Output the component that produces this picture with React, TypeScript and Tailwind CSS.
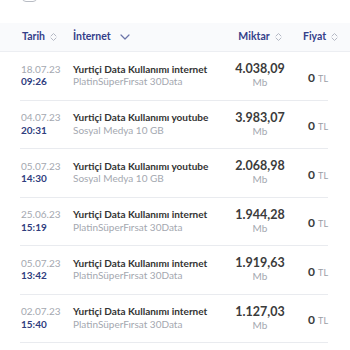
import React from 'react';

type Row = {
  date: string;
  time: string;
  title: string;
  sub: string;
  amount: string;
};

const rows: Row[] = [
  { date: '18.07.23', time: '09:26', title: 'Yurtiçi Data Kullanımı internet', sub: 'PlatinSüperFırsat 30Data', amount: '4.038,09' },
  { date: '04.07.23', time: '20:31', title: 'Yurtiçi Data Kullanımı youtube', sub: 'Sosyal Medya 10 GB', amount: '3.983,07' },
  { date: '05.07.23', time: '14:30', title: 'Yurtiçi Data Kullanımı youtube', sub: 'Sosyal Medya 10 GB', amount: '2.068,98' },
  { date: '25.06.23', time: '15:19', title: 'Yurtiçi Data Kullanımı internet', sub: 'PlatinSüperFırsat 30Data', amount: '1.944,28' },
  { date: '05.07.23', time: '13:42', title: 'Yurtiçi Data Kullanımı internet', sub: 'PlatinSüperFırsat 30Data', amount: '1.919,63' },
  { date: '02.07.23', time: '15:40', title: 'Yurtiçi Data Kullanımı internet', sub: 'PlatinSüperFırsat 30Data', amount: '1.127,03' },
];

const SortIcon = () => (
  <svg width="7" height="10" viewBox="0 0 7 10" fill="none" stroke="#b4b8c4" strokeWidth="1" className="ml-[5px] shrink-0">
    <path d="M1 4 L3.5 1.5 L6 4" strokeLinecap="round" strokeLinejoin="round" />
    <path d="M1 6 L3.5 8.5 L6 6" strokeLinecap="round" strokeLinejoin="round" />
  </svg>
);

const App: React.FC = () => {
  return (
    <div className="w-[350px] h-[350px] overflow-hidden bg-white font-['Lato',sans-serif]">
      {/* Filter (cut off at top) */}
      <div className="h-[23px] overflow-hidden">
        <div className="flex items-center gap-[8px] pl-[22px] -mt-[15px]">
          <div className="w-[15px] h-[17px] rounded-[4px] border border-[#b8bcc4] bg-white" />
          <span className="text-[12px] leading-[17px] text-[#555]">Fiyatı 0 TL olanları gizle</span>
        </div>
      </div>

      {/* Header */}
      <div className="h-[29px] bg-[#f9fafc] border-b border-[#eceef2]">
        <div className="ml-[20px] w-[308px] h-full grid grid-cols-[52px_143px_86px_27px] items-center text-[10.5px] font-bold text-[#34408a] whitespace-nowrap">
          <div className="flex items-center pl-[2px]">
            Tarih
            <SortIcon />
          </div>
          <div className="flex items-center pl-[1px]">
            İnternet
            <svg width="10" height="6" viewBox="0 0 10 6" fill="none" stroke="#6b74a8" strokeWidth="1.2" className="ml-[9px]">
              <path d="M1 1 L5 5 L9 1" strokeLinecap="round" strokeLinejoin="round" />
            </svg>
          </div>
          <div className="flex items-center justify-center pl-[4px]">
            Miktar
            <SortIcon />
          </div>
          <div className="flex items-center pl-[2px]">
            Fiyat
            <SortIcon />
          </div>
        </div>
      </div>

      {/* Rows */}
      <div className="ml-[20px] w-[308px]">
        {rows.map((r, i) => (
          <div
            key={i}
            className="h-[48.5px] grid grid-cols-[52px_143px_86px_27px] items-center border-b border-[#e9ebef] whitespace-nowrap"
          >
            <div className="flex flex-col text-[10px] leading-[12.5px] -mt-[1px] pl-[1px]">
              <span className="text-[#a4a8b0]">{r.date}</span>
              <span className="text-[#2f3d7e] font-bold">{r.time}</span>
            </div>
            <div className="flex flex-col text-[10px] leading-[12.5px] -mt-[1px] pl-[1px]">
              <span className="text-[#333] font-bold">{r.title}</span>
              <span className="text-[#a4a8b0]">{r.sub}</span>
            </div>
            <div className="flex flex-col items-center pl-[4px]">
              <span className="text-[12.5px] leading-[14px] font-bold text-[#3b3b3b]">{r.amount}</span>
              <span className="text-[10px] leading-[13px] text-[#a4a8b0]">Mb</span>
            </div>
            <div className="flex items-baseline justify-end mt-[4px]">
              <span className="text-[12px] font-bold text-[#3b3b3b]">0</span>
              <span className="text-[9px] text-[#9a9ea6] ml-[3px]">TL</span>
            </div>
          </div>
        ))}
      </div>
    </div>
  );
};

export default App;
